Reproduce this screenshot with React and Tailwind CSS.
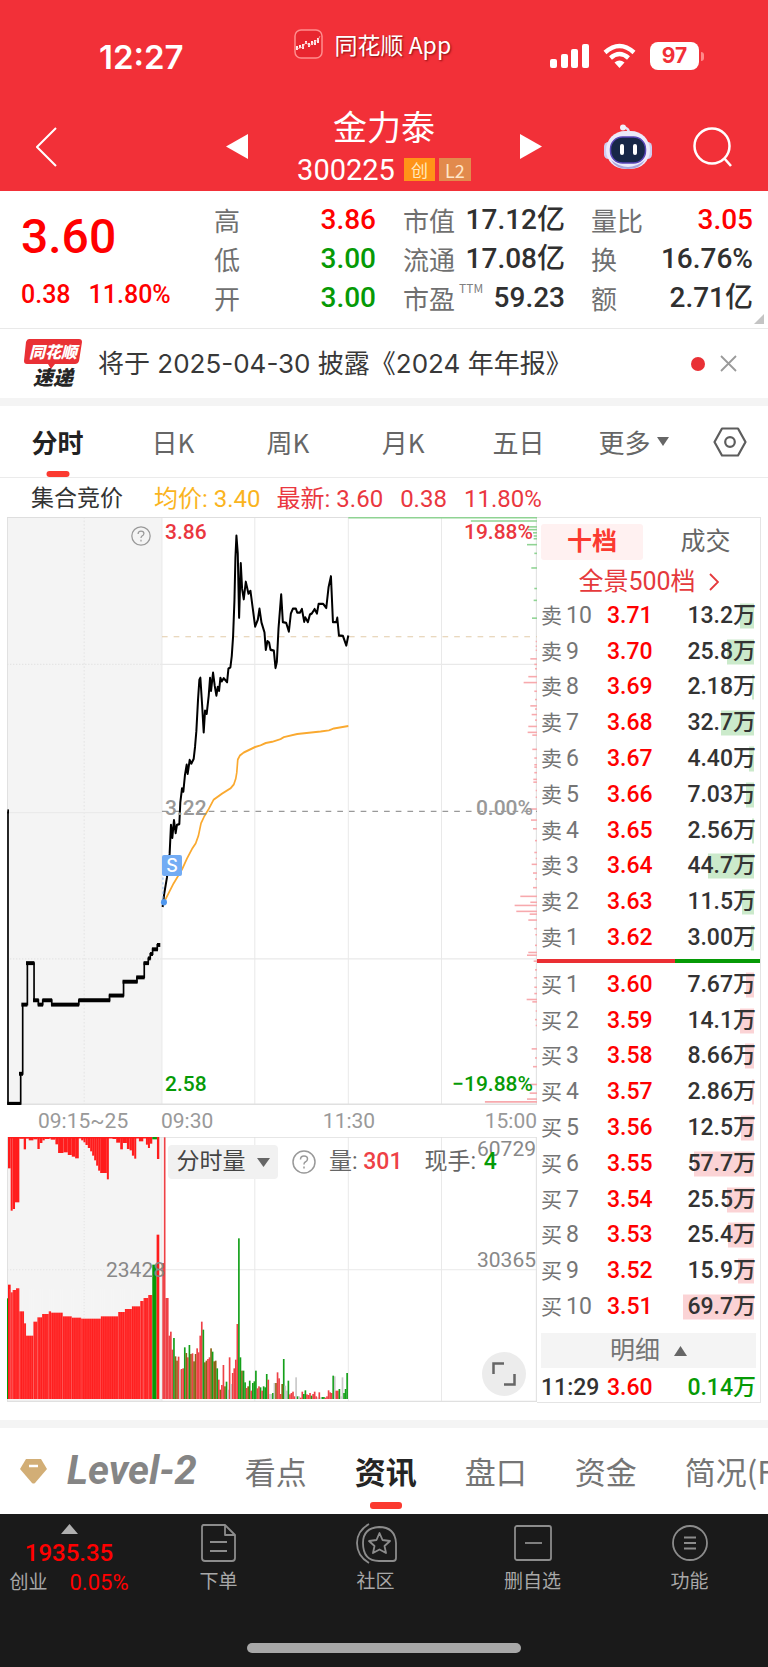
import {Fragment} from "react";

const NUM = "font-[Roboto,'Noto_Sans_CJK_SC',sans-serif]";
const GREEN = "#069a06";

const quotes = [
    [
        {label: "高", value: "3.86", color: "text-[#ff0000]"},
        {label: "低", value: "3.00", color: "text-[#069a06]"},
        {label: "开", value: "3.00", color: "text-[#069a06]"},
    ],
    [
        {label: "市值", value: "17.12亿", color: "text-[#303030]"},
        {label: "流通", value: "17.08亿", color: "text-[#303030]"},
        {label: "市盈", sup: "TTM", value: "59.23", color: "text-[#303030]"},
    ],
    [
        {label: "量比", value: "3.05", color: "text-[#ff0000]"},
        {label: "换", value: "16.76%", color: "text-[#303030]"},
        {label: "额", value: "2.71亿", color: "text-[#303030]"},
    ],
];

// [level, price, volume, depth bar width]
const sells = [
    ["10", "3.71", "13.2万", 14],
    ["9", "3.70", "25.8万", 27],
    ["8", "3.69", "2.18万", 2],
    ["7", "3.68", "32.7万", 33],
    ["6", "3.67", "4.40万", 5],
    ["5", "3.66", "7.03万", 8],
    ["4", "3.65", "2.56万", 2],
    ["3", "3.64", "44.7万", 46],
    ["2", "3.63", "11.5万", 12],
    ["1", "3.62", "3.00万", 3],
];

const buys = [
    ["1", "3.60", "7.67万", 8],
    ["2", "3.59", "14.1万", 14],
    ["3", "3.58", "8.66万", 9],
    ["4", "3.57", "2.86万", 2],
    ["5", "3.56", "12.5万", 13],
    ["6", "3.55", "57.7万", 60],
    ["7", "3.54", "25.5万", 27],
    ["8", "3.53", "25.4万", 26],
    ["9", "3.52", "15.9万", 16],
    ["10", "3.51", "69.7万", 71],
];

const auctionLine = "24,763 24,1503 62,1503 62,1427 68,1427 68,1252 82,1252 82,1147 102,1147 102,1241 115,1241 115,1252 128,1252 128,1241 155,1241 155,1252 236,1252 236,1241 328,1241 328,1229 370,1229 370,1194 410,1194 410,1183 432,1183 432,1147 444,1147 444,1135 450,1135 450,1124 457,1124 457,1112 471,1112 471,1101 478,1101";

// flat steps of the auction line, drawn bolder: [x1, x2, y]
const auctionSteps = [
    [22, 27, 763], [22, 62, 1503], [57, 69, 1427], [64, 82, 1252], [78, 103, 1147], [99, 116, 1241], [113, 129, 1252],
    [127, 156, 1241], [153, 237, 1252], [235, 330, 1241], [326, 371, 1229], [367, 412, 1194], [408, 433, 1183],
    [430, 446, 1147], [443, 451, 1135], [449, 458, 1124], [455, 473, 1112], [470, 480, 1101],
];

const priceLine = "487,1005 492,970 500,930 508,870 512,797 516,830 521,785 526,818 530,797 537,795 540,740 545,705 549,713 554,670 559,645 562,668 568,633 573,642 580,630 584,600 588,560 593,480 597,430 600,425 605,490 610,563 614,508 619,516 625,470 629,425 632,458 638,412 643,445 648,470 652,448 656,458 660,425 664,434 670,426 680,436 684,402 690,398 694,370 698,320 702,230 705,120 708,65 712,110 716,273 721,135 725,200 730,226 736,182 744,212 750,205 757,250 764,295 772,278 777,250 783,285 792,310 796,354 801,332 806,336 810,354 820,356 825,400 829,385 834,300 842,214 847,284 857,286 865,308 871,262 877,250 886,250 890,260 898,260 904,251 911,283 914,272 922,284 928,265 934,262 942,251 949,262 954,238 968,238 977,248 984,195 991,168 997,284 1007,284 1010,273 1015,318 1027,319 1037,343 1043,318";

const averageLine = "487,1000 520,945 545,910 560,882 575,858 586,844 594,825 602,793 612,775 625,757 640,733 665,718 690,705 700,695 706,680 709,665 712,632 718,622 730,614 764,600 780,596 796,590 815,587 840,580 850,575 890,567 960,561 985,558 1000,553 1043,547";

// resting orders by price along the right edge: [y, length]
const greenDepth = [
    [20, 565], [28, 198], [43, 30], [50, 28], [58, 12], [66, 10], [73, 10], [88, 30], [110, 8], [147, 17], [199, 8], [229, 10], [274, 15],
];
const pinkDepth = [
    [333, 4], [345, 4], [355, 4], [377, 20], [391, 8], [402, 6], [422, 26], [437, 40], [459, 8], [480, 6], [496, 20], [504, 6],
    [518, 16], [532, 6], [548, 26], [563, 28], [570, 14], [606, 14], [628, 8], [645, 8], [651, 8], [665, 8], [682, 11], [689, 11],
    [710, 4], [727, 4], [757, 22], [785, 18], [807, 12], [837, 6], [867, 8], [882, 4], [897, 16], [919, 12], [934, 6], [956, 12],
    [978, 50], [993, 20], [1001, 67], [1016, 62], [1023, 22], [1038, 26], [1060, 8], [1075, 5], [1102, 6], [1120, 26], [1127, 30],
    [1142, 10], [1164, 6], [1184, 8], [1208, 8], [1224, 8], [1239, 31], [1245, 14], [1268, 4], [1290, 6], [1305, 4], [1364, 16],
    [1387, 6], [1409, 12], [1454, 22], [1476, 22], [1491, 30], [1498, 156],
];

// auction volume, [x from, x to, y]
const matched = [
    [24, 32, 557], [32, 38, 580], [38, 48, 573], [48, 58, 568], [58, 72, 637], [72, 78, 673], [78, 100, 710], [100, 112, 668],
    [112, 126, 655], [126, 146, 645], [146, 153, 637], [153, 188, 641], [188, 215, 652], [215, 243, 656], [243, 302, 659],
    [302, 354, 652], [354, 374, 639], [374, 395, 630], [395, 420, 622], [420, 430, 606], [430, 444, 597], [444, 456, 588],
];
const unmatched = [
    [24, 32, 208], [32, 38, 335], [38, 45, 330], [45, 58, 310], [58, 71, 119], [71, 78, 151], [78, 86, 118], [86, 100, 124],
    [100, 112, 121], [112, 119, 150], [119, 127, 132], [127, 134, 124], [134, 148, 120], [152, 166, 122], [166, 174, 136],
    [174, 190, 162], [190, 203, 160], [203, 215, 168], [215, 225, 173], [225, 236, 178], [243, 250, 124], [250, 256, 130],
    [256, 263, 138], [263, 270, 147], [270, 276, 157], [276, 282, 170], [282, 288, 184], [288, 294, 200], [294, 300, 215],
    [300, 320, 222], [320, 326, 241], [337, 348, 120], [348, 360, 131], [360, 368, 151], [368, 380, 132], [380, 388, 150],
    [388, 395, 154], [395, 402, 170], [402, 408, 179], [408, 416, 116], [416, 429, 127], [429, 437, 117], [437, 443, 137],
    [443, 449, 147], [449, 456, 134],
];

// minute volume from 09:30, one letter for the colour: r up, g down, n flat, m mixed
const minutes = "r408 r785 r303 r303 r190 r202 r148 g183 m128 m115 r127 n88 r90 r92 g155 m138 r125 g162 m135 r137 m113 m135 r152 r140 r190 r232 g208 m110 m115 r120 r125 m152 g142 m113 m115 g92 r58 m28 r42 r102 m38 g52 n28 r125 n45 r78 r92 r118 r225 g482 g125 m85 g85 g50 r33 m38 g55 r25 g48 g53 g85 r32 r38 g35 r25 g38 g35 g75 r58 n15 n15 g18 n48 m48 r80 r62 r15 m45 g120 n40 n25 g55 r14 r18 r22 r8 n65 g8 n8 r4 r22 g15 g26 r14 r12 r18 g10 r15 r22 r8 n5 r20 n5 g6 g6 r4 r8 r26 r20 r18 g70 n68 r25 r25 g30 n8 n65 g18 g30 g78".split(" ");
const fills = {r: "#ee4146", g: "#14a01a", n: "#c9c9c9", m: "#8a6414"};

function StatusBar() {
    return (
        <div className="flex h-[88px] items-start justify-between pl-[99px] pr-[64px]">
            <span className="pt-[38px] font-[Inter,sans-serif] text-[33px] leading-[38px] font-semibold">12:27</span>
            <div className="ml-[12px] flex items-center gap-[11px] pt-[28px]">
                <svg width="29" height="30" viewBox="0 0 29 30">
                    <rect x="1" y="1" width="27" height="28" rx="6" fill="#e8262f" stroke="#ff8d8d" strokeWidth="1.5"/>
                    <path d="M3 21V17M6 19V16M9 20V15M12 15V12M15 18V14M18 16V12M21 16V11M24 14V9" stroke="#fff" strokeWidth="1.8" fill="none"/>
                    <path d="M3 20L9 18L12 13L15 17L21 13Q25 11 26 7" stroke="#ffb5b5" strokeWidth="0.8" fill="none"/>
                </svg>
                <span className="text-[23px] leading-[32px] [text-shadow:1px_1px_2px_rgba(90,0,0,0.7)]">同花顺 App</span>
            </div>
            <div className="flex items-center gap-[14px] pt-[42px]">
                <svg width="39" height="26" viewBox="0 0 39 26" fill="#fff">
                    <rect x="0" y="16" width="7" height="9" rx="2"/>
                    <rect x="11" y="11" width="7" height="14" rx="2"/>
                    <rect x="21" y="6" width="7" height="19" rx="2"/>
                    <rect x="32" y="1" width="7" height="24" rx="2"/>
                </svg>
                <svg width="33" height="26" viewBox="0 0 33 26" fill="none" stroke="#fff" strokeWidth="4.4">
                    <path d="M2 9.500Q16.500 -3.500 31 9.500"/>
                    <path d="M7.500 15Q16.500 7 25.500 15"/>
                    <path d="M16.500 25L11.500 19.500Q16.500 15.500 21.500 19.500Z" fill="#fff" stroke="none"/>
                </svg>
                <div className="flex items-center gap-[2px]">
                    <span className="flex h-[28px] w-[49px] items-center justify-center rounded-[8px] bg-white font-[Inter,sans-serif] text-[21px] font-bold text-[#f23038]">97</span>
                    <span className="h-[9px] w-[3px] rounded-r-full bg-[#ff8a8a]"/>
                </div>
            </div>
        </div>
    );
}

function Robot() {
    return (
        <svg width="48" height="46" viewBox="0 0 48 46">
            <path d="M25 9Q25 4 19 3" stroke="#e4e3f6" strokeWidth="2.500" fill="none"/>
            <circle cx="19" cy="3.500" r="3" fill="#f1f0fb"/>
            <rect x="0" y="18" width="9" height="17" rx="4.500" fill="#cfcdf0"/>
            <rect x="39" y="18" width="9" height="17" rx="4.500" fill="#cfcdf0"/>
            <rect x="2" y="7" width="44" height="38" rx="19" fill="#eceafa"/>
            <path d="M7 36Q24 50 41 36Q36 45 24 45Q12 45 7 36Z" fill="#a9a6dd"/>
            <rect x="6.500" y="13" width="35" height="26" rx="12" fill="#172747" stroke="#5946b8" strokeWidth="1.500"/>
            <rect x="16" y="20" width="4" height="11" rx="2" fill="#fff"/>
            <rect x="29" y="20" width="4" height="11" rx="2" fill="#fff"/>
        </svg>
    );
}

function NavBar() {
    return (
        <div className="grid h-[103px] grid-cols-[1fr_auto_1fr] items-center px-[36px] pt-[14px]">
            <button aria-label="返回" className="justify-self-start">
                <svg width="21" height="40" viewBox="0 0 21 40" fill="none" stroke="#fff" strokeWidth="2"><path d="M20 1L1 20L20 39"/></svg>
            </button>
            <div className="flex w-[317px] items-center justify-between">
                <button aria-label="上一只">
                    <svg width="22" height="25" viewBox="0 0 22 25" fill="#fff"><path d="M22 0V25L0 12.500Z"/></svg>
                </button>
                <div className="flex flex-col items-center gap-[4px] pb-[4px]">
                    <h1 className="text-[34px] leading-[46px]">金力泰</h1>
                    <div className="flex items-center gap-[4px]">
                        <span className={`${NUM} mr-[5px] text-[29px] leading-[34px]`}>300225</span>
                        <span className="flex h-[23px] w-[31px] items-center justify-center bg-[#ff9418] text-[17px] leading-none text-[#ffe9bd]">创</span>
                        <span className="flex h-[23px] w-[32px] items-center justify-center bg-[#e28a4c] text-[18px] leading-none text-[#ffe6c8]">L2</span>
                    </div>
                </div>
                <button aria-label="下一只">
                    <svg width="22" height="25" viewBox="0 0 22 25" fill="#fff"><path d="M0 0V25L22 12.500Z"/></svg>
                </button>
            </div>
            <div className="flex items-center gap-[41px] justify-self-end">
                <button aria-label="智能助手"><Robot/></button>
                <button aria-label="搜索">
                    <svg width="39" height="40" viewBox="0 0 39 40" fill="none" stroke="#fff" strokeWidth="2.500">
                        <circle cx="19" cy="19" r="17.500"/><path d="M31 31L38 39"/>
                    </svg>
                </button>
            </div>
        </div>
    );
}

function Quote() {
    return (
        <section className="relative grid h-[138px] grid-cols-[214fr_162fr_27fr_162fr_26fr_162fr_15fr] border-b border-[#e9e9e9]">
            <div className={`${NUM} pl-[21px] pt-[18px] font-medium text-[#ff0000]`}>
                <div className="text-[48px] leading-[56px]">3.60</div>
                <div className="mt-[13px] flex gap-[18px] text-[25px] leading-[34px]"><span>0.38</span><span>11.80%</span></div>
            </div>
            {quotes.map((column, i) => (
                <Fragment key={i}>
                    {i > 0 && <span/>}
                    <dl className="pt-[9px]">
                        {column.map((q) => (
                            <div key={q.label} className="flex h-[39px] items-center justify-between">
                                <dt className="flex whitespace-nowrap text-[26px] leading-[39px] text-[#707070]">
                                    {q.label}{q.sup && <sup className="top-0 ml-[4px] pt-[4px] text-[12px] leading-none text-[#808080]">{q.sup}</sup>}
                                </dt>
                                <dd className={`${NUM} ${q.color} text-[28px] leading-[39px] font-medium`}>{q.value}</dd>
                            </div>
                        ))}
                    </dl>
                </Fragment>
            ))}
            <svg className="absolute right-[4px] bottom-[4px]" width="10" height="10" viewBox="0 0 10 10" fill="#c4c4c4"><path d="M10 0V10H0Z"/></svg>
        </section>
    );
}

function Notice() {
    return (
        <section className="flex h-[69px] items-center pl-[24px] pr-[31px]">
            <div className="relative flex w-[58px] flex-col items-center">
                <svg className="absolute top-0 left-0" width="58" height="30" viewBox="0 0 58 30" fill="#e93035">
                    <path d="M5 0H55Q58 0 58 3L55 22Q54 25 51 25H31L27 30L24 25H3Q0 25 0 22L2 3Q3 0 5 0Z"/>
                </svg>
                <span className="relative text-[16px] leading-[25px] font-black text-white italic">同花顺</span>
                <span className="mt-[2px] text-[20px] leading-[22px] font-black text-[#252525] italic">速递</span>
            </div>
            <a href="#notice" className="ml-[16px] flex-1 font-[Inter,'Noto_Sans_CJK_SC',sans-serif] text-[26px] whitespace-nowrap text-[#383838]">将于 2025-04-30 披露《2024 年年报》</a>
            <span className="h-[14px] w-[14px] rounded-full bg-[#e93035]"/>
            <button aria-label="关闭" className="ml-[15px]">
                <svg width="17" height="17" viewBox="0 0 17 17" stroke="#9a9a9a" strokeWidth="1.800"><path d="M1 1L16 16M16 1L1 16"/></svg>
            </button>
        </section>
    );
}

function PeriodTabs() {
    return (
        <nav className="grid h-[72px] grid-cols-[repeat(6,3fr)_2fr] border-b border-[#ebebeb] text-[26px] text-[#666]">
            <button className="relative font-bold text-[#222]">
                分时
                <span className="absolute bottom-0 left-1/2 h-[6px] w-[23px] -translate-x-1/2 rounded-[3px] bg-[#fb3a30]"/>
            </button>
            {["日K", "周K", "月K", "五日"].map((t) => <button key={t}>{t}</button>)}
            <button className="flex items-center justify-center gap-[6px]">
                更多<svg width="12" height="9" viewBox="0 0 12 9" fill="#666"><path d="M0 0H12L6 9Z"/></svg>
            </button>
            <button aria-label="设置" className="flex items-center justify-center">
                <svg width="34" height="30" viewBox="0 0 34 30" fill="none" stroke="#5d5d5d" strokeWidth="2.200" strokeLinejoin="round">
                    <path d="M9 1.500H25L32.500 15L25 28.500H9L1.500 15Z"/><circle cx="17" cy="15" r="4.800"/>
                </svg>
            </button>
        </nav>
    );
}

function Help({size}) {
    return (
        <svg width={size} height={size} viewBox="0 0 24 24" fill="none" stroke="#999" strokeWidth="1.500">
            <circle cx="12" cy="12" r="11"/>
            <path d="M8.500 9.500Q8.500 6 12 6Q15.500 6 15.500 9Q15.500 11 13 12.200Q12 12.800 12 14.500M12 16.500V18.500"/>
        </svg>
    );
}

function PriceChart() {
    return (
        <div className={`${NUM} relative text-[21px] leading-[24px] font-medium`}>
            <svg className="block h-[588px] w-full" viewBox="21 18 1587 1488" preserveAspectRatio="none" fill="none">
                <rect x="21" y="18" width="464" height="1488" fill="#f4f4f4"/>
                <path d="M252 18V1505M21 391H485M21 1136H485" stroke="#e4e4e4" strokeWidth="3" strokeDasharray="4 5"/>
                <path d="M21 766H485" stroke="#eaeaea" strokeWidth="3"/>
                <path d="M485 391H1608M485 1136H1608M485 18V1505M763 18V1505M1043 18V1505M1322 18V1505" stroke="#e9e9e9" strokeWidth="3"/>
                <path d="M22 1505V19H1606V1505" stroke="#dedede" strokeWidth="3"/>
                <path d="M21 1504H1608" stroke="#e0e0e0" strokeWidth="4"/>
                <path d="M485 321H1608" stroke="#e2cba9" strokeWidth="3" strokeDasharray="17 18"/>
                <path d="M485 763H1608" stroke="#999" strokeWidth="3" strokeDasharray="17 18"/>
                {greenDepth.map(([y, w]) => <path key={y} d={`M${1608 - w} ${y}H1608`} stroke="#8fd393" strokeWidth="4"/>)}
                {pinkDepth.map(([y, w]) => <path key={y} d={`M${1608 - w} ${y}H1608`} stroke="#f7a9ad" strokeWidth="4"/>)}
                <polyline points={auctionLine} stroke="#000" strokeWidth="5"/>
                {auctionSteps.map(([a, b, y]) => <path key={`${a}-${y}`} d={`M${a} ${y}H${b}`} stroke="#000" strokeWidth="10"/>)}
                <polyline points={averageLine} stroke="#faa92f" strokeWidth="5" strokeLinejoin="round"/>
                <polyline points={priceLine} stroke="#000" strokeWidth="6" strokeLinejoin="round"/>
                <path d="M488 930V990" stroke="#8cb9f3" strokeWidth="3" strokeDasharray="6 6"/>
                <ellipse cx="491" cy="993" rx="9" ry="8" fill="#4f97ee"/>
            </svg>
            <span className="absolute top-[9px] left-[124px]"><Help size={20}/></span>
            <span className="absolute top-[3px] left-[158px] text-[#ea3740]">3.86</span>
            <span className="absolute top-[3px] right-[4px] text-[#ea3740]">19.88%</span>
            <span className="absolute top-1/2 left-[158px] -translate-y-[15px] text-[#999]">3.22</span>
            <span className="absolute top-1/2 right-[4px] -translate-y-[15px] text-[#999]">0.00%</span>
            <span className="absolute bottom-[9px] left-[158px] text-[#069a06]">2.58</span>
            <span className="absolute right-[4px] bottom-[9px] text-[#069a06]">−19.88%</span>
            <span className="absolute top-[338px] left-[155px] flex h-[21px] w-[20px] items-center justify-center rounded-[2px] bg-[#73acf4] font-[Inter,sans-serif] text-[18px] leading-none text-white">S</span>
        </div>
    );
}

function VolumeChart() {
    return (
        <div className={`${NUM} relative text-[21px] leading-[24px] text-[#888]`}>
            <svg className="block h-[265px] w-full" viewBox="21 114 1587 795" preserveAspectRatio="none" fill="none">
                <rect x="21" y="114" width="464" height="795" fill="#f4f4f4"/>
                <path d="M252 114V908M21 512H485" stroke="#e4e4e4" strokeWidth="3" strokeDasharray="4 5"/>
                <path d="M485 512H1608M485 114V908M763 114V908M1043 114V908M1322 114V908" stroke="#e9e9e9" strokeWidth="3"/>
                <path d="M22 907V115H1606V907" stroke="#dedede" strokeWidth="3"/>
                <path d="M21 907H1608" stroke="#e0e0e0" strokeWidth="4"/>
                <path d="M24 116H456" stroke="#ff1c1c" strokeWidth="5"/>
                {matched.map(([a, b, y]) => <rect key={a} x={a} y={y} width={b - a} height={900 - y} fill="#ff1c1c"/>)}
                {unmatched.map(([a, b, y]) => <rect key={a} x={a} y="114" width={b - a} height={y - 114} fill="#ff1c1c"/>)}
                {Array.from({length: 80}, (_, i) => <path key={i} d={`M${29 + i * 5.45} 570V900`} stroke="#fff" strokeOpacity="0.22" strokeWidth="1.500"/>)}
                <rect x="20" y="598" width="4" height="302" fill={GREEN}/>
                <rect x="456" y="497" width="13" height="403" fill={GREEN}/>
                <rect x="456" y="114" width="14" height="7" fill={GREEN}/>
                <rect x="469" y="407" width="8" height="493" fill="#ff1c1c"/>
                <rect x="470" y="114" width="7" height="66" fill="#ff1c1c"/>
                {minutes.map((m, i) => {
                    const h = Number(m.slice(1));
                    return <rect key={i} x={486 + i * 4.63} y={900 - h} width="5" height={h} fill={fills[m[0]]}/>;
                })}
            </svg>
            <span className="absolute top-[121px] left-[99px]">23428</span>
            <span className="absolute top-0 right-[1px]">60729</span>
            <span className="absolute top-[111px] right-[1px]">30365</span>
            <div className="absolute top-[8px] left-[161px] flex items-center text-[23px] leading-[34px] whitespace-nowrap text-[#666]">
                <button className="flex h-[34px] w-[110px] items-center justify-center gap-[11px] rounded-[4px] bg-[#f1f1f1] text-[#444]">
                    分时量<svg width="13" height="9" viewBox="0 0 13 9" fill="#666"><path d="M0 0H13L6.500 9Z"/></svg>
                </button>
                <button aria-label="说明" className="mr-[13px] ml-[14px]"><Help size={24}/></button>
                <span>量: <b className="font-medium text-[#ee4146]">301</b></span>
                <span className="ml-[22px]">现手: <b className="ml-[2px] font-medium text-[#069a06]">4</b></span>
            </div>
            <button aria-label="全屏" className="absolute right-[11px] bottom-[6px] flex h-[44px] w-[44px] items-center justify-center rounded-full bg-[#ececec]">
                <svg width="24" height="24" viewBox="0 0 24 24" fill="none" stroke="#666" strokeWidth="2.500"><path d="M1.500 12V1.500H12M22.500 12V22.500H12"/></svg>
            </button>
        </div>
    );
}

function Levels({name, rows, color}) {
    return (
        <table className="h-[358px] w-full">
            <tbody>
            {rows.map(([level, price, volume, width]) => (
                <tr key={level} className="h-[35px]">
                    <th scope="row" className="w-[66px] p-0 text-left text-[23px] leading-[28px] font-normal whitespace-nowrap text-[#757575]">
                        <span className="mr-[4px] text-[21px]">{name}</span>{level}
                    </th>
                    <td className="p-0 text-[23px] leading-[28px] font-medium text-[#ff0000]">{price}</td>
                    <td className="relative p-0 text-right text-[23px] leading-[28px] font-medium text-[#333]">
                        <span className={`absolute top-1/2 right-[2px] h-[25px] -translate-y-1/2 ${color}`} style={{width}}/>
                        <span className="relative">{volume}</span>
                    </td>
                </tr>
            ))}
            </tbody>
        </table>
    );
}

function OrderBook() {
    return (
        <aside className={`${NUM} flex w-[224px] flex-col border-t border-r border-b border-[#e4e4e4]`}>
            <div className="flex h-[42px] items-end px-[4px] text-[25px] leading-[36px]">
                <button className="h-[36px] w-[102px] rounded-[3px] bg-[#fff1f1] font-bold text-[#fb3a30]">十档</button>
                <button className="h-[36px] flex-1 pl-[12px] text-[#666]">成交</button>
            </div>
            <a href="#depth" className="flex h-[38px] items-center justify-center gap-[13px] pt-[6px] text-[25px] leading-[32px] text-[#e5393c]">
                全景500档
                <svg width="10" height="18" viewBox="0 0 10 18" fill="none" stroke="#e5393c" strokeWidth="1.800"><path d="M1 1L9 9L1 17"/></svg>
            </a>
            <div className="pr-[4px] pl-[4px]"><Levels name="卖" rows={sells} color="bg-[#cbeacb]"/></div>
            <div className="mt-[3px] mb-[4px] flex h-[4px]"><span className="w-[138px] bg-[#ea2f33]"/><span className="flex-1 bg-[#069a06]"/></div>
            <div className="pr-[4px] pl-[4px]"><Levels name="买" rows={buys} color="bg-[#fbd3d5]"/></div>
            <button className="mx-[4px] mt-[8px] flex h-[35px] items-center justify-center gap-[14px] bg-[#f4f4f4] text-[25px] leading-[35px] text-[#757575]">
                明细<svg width="13" height="10" viewBox="0 0 13 10" fill="#666"><path d="M0 10H13L6.500 0Z"/></svg>
            </button>
            <div className="flex flex-1 items-center px-[4px] pt-[6px] text-[23px] leading-[28px] font-medium text-[#333]">
                <span className="w-[66px]">11:29</span><span className="text-[#ff0000]">3.60</span><span className="ml-auto text-[#069a06]">0.14万</span>
            </div>
        </aside>
    );
}

function Chart() {
    return (
        <section>
            <div className={`${NUM} flex h-[39px] items-center pt-[2px] pl-[31px] text-[24px] leading-[36px] whitespace-nowrap text-[#ea3740]`}>
                <span className="text-[23px] text-[#333]">集合竞价</span>
                <span className="ml-[31px] text-[#fab41e]">均价: 3.40</span>
                <span className="ml-[16px]">最新: 3.60</span>
                <span className="ml-[17px]">0.38</span>
                <span className="ml-[17px]">11.80%</span>
            </div>
            <div className="flex pr-[7px] pl-[7px]">
                <div className="min-w-0 flex-1">
                    <PriceChart/>
                    <div className={`${NUM} grid h-[32px] grid-cols-[154px_1fr_1fr] items-center text-[21px] leading-[30px] text-[#999]`}>
                        <span className="pl-[31px]">09:15~25</span>
                        <span>09:30</span>
                        <span className="flex justify-between"><span className="-translate-x-1/2">11:30</span><span>15:00</span></span>
                    </div>
                    <VolumeChart/>
                </div>
                <OrderBook/>
            </div>
        </section>
    );
}

function InfoTabs() {
    return (
        <nav className="flex h-[86px] items-center gap-[48px] overflow-hidden pl-[20px] text-[31px] leading-[84px] whitespace-nowrap text-[#757575]">
            <button className="flex items-center gap-[20px]">
                <svg width="27" height="25" viewBox="0 0 27 25"><path d="M6 0H21L27 10L15 24Q13.500 25 12 24L0 10Z" fill="#d2ae76"/><path d="M9 7H18" stroke="#fff" strokeWidth="2.500"/></svg>
                <span className="font-[Roboto,sans-serif] text-[40px] font-bold text-[#858585] italic">Level-2</span>
            </button>
            <button>看点</button>
            <button className="relative font-bold text-[#252525]">
                资讯
                <span className="absolute bottom-[4px] left-1/2 h-[7px] w-[32px] -translate-x-1/2 rounded-[3px] bg-[#fb3a30]"/>
            </button>
            <button>盘口</button>
            <button>资金</button>
            <button>简况(F10)</button>
        </nav>
    );
}

const actions = [
    {label: "下单", icon: <><path d="M3 1H25L35 11V34Q35 37 32 37H5Q2 37 2 34V3Q2 1 4 1ZM25 1V11H35"/><path d="M10 18H27M10 27H27"/></>},
    {label: "社区", icon: <><path d="M22 3Q6 4 6 19Q6 37 22 37H36Q39 37 39 34V19Q38 3 22 3Z"/><path d="M12 0Q0 7 0 19Q0 32 12 39"/><path d="M22.500 9L25.500 16L33 17L27.500 22L29 29L22.500 25.500L16 29L17.500 22L12 17L19.500 16Z"/></>},
    {label: "删自选", icon: <><rect x="1" y="2" width="36" height="34" rx="2"/><path d="M11 19H28"/></>},
    {label: "功能", icon: <><circle cx="19" cy="19" r="17"/><path d="M13 13.500H25M13 19H25M13 24.500H25"/></>},
];

function BottomBar() {
    return (
        <footer className="h-[153px] bg-[#1a1a1a] text-[#a8a8a8]">
            <div className="flex">
                <button className={`${NUM} flex w-[140px] flex-col items-center pt-[10px] pr-[2px] text-[#ff0000]`}>
                    <svg width="17" height="10" viewBox="0 0 17 10" fill="#b0b0b0"><path d="M0 10H17L8.500 0Z"/></svg>
                    <span className="mt-[4px] text-[24px] leading-[30px] font-medium">1935.35</span>
                    <span className="flex items-center gap-[22px] text-[22px] leading-[30px]"><span className="text-[19px] text-[#a8a8a8]">创业</span>0.05%</span>
                </button>
                {actions.map(({label, icon}) => (
                    <button key={label} className="flex flex-1 flex-col items-center pt-[10px]">
                        <svg className="overflow-visible" width="38" height="38" viewBox="0 0 38 38" fill="none" stroke="#8c8c8c" strokeWidth="1.800" strokeLinejoin="round">{icon}</svg>
                        <span className="mt-[4px] text-[19px] leading-[28px]">{label}</span>
                    </button>
                ))}
            </div>
            <div className="mx-auto mt-[45px] h-[10px] w-[274px] rounded-full bg-[#a8a8a8]"/>
        </footer>
    );
}

export default function App() {
    return (
        <main className="w-full overflow-hidden bg-white font-['Noto_Sans_CJK_SC',sans-serif]">
            <header className="bg-[#f23038] text-white">
                <StatusBar/>
                <NavBar/>
            </header>
            <Quote/>
            <Notice/>
            <div className="h-[8px] bg-[#f4f4f4]"/>
            <PeriodTabs/>
            <Chart/>
            <div className="mt-[17px] h-[8px] bg-[#f4f4f4]"/>
            <InfoTabs/>
            <BottomBar/>
        </main>
    );
}
